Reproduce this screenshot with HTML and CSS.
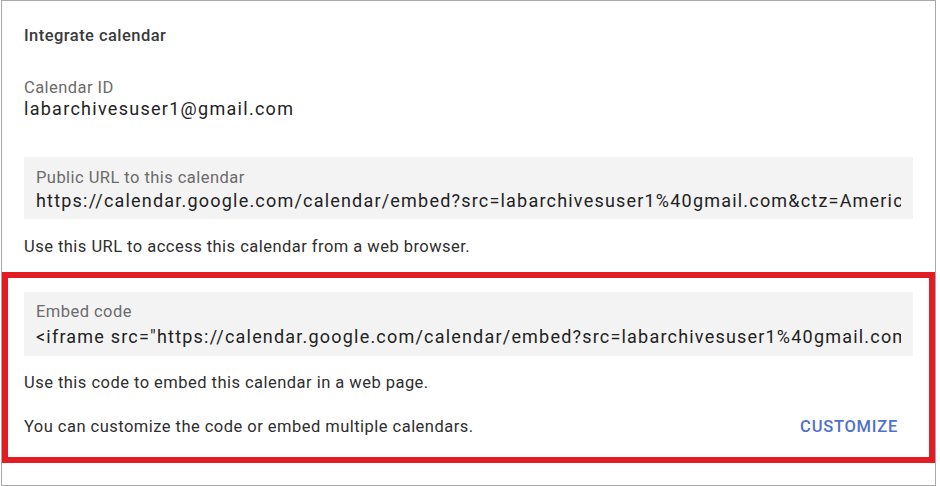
FILE: index.html
```html
<!DOCTYPE html>
<html lang="en">
<head>
<meta charset="utf-8">
<title>Integrate calendar</title>
<link rel="stylesheet" href="styles.css">
</head>
<body>
<div class="frame">
  <section class="top">
    <h2 class="title">Integrate calendar</h2>
    <div class="field">
      <div class="label">Calendar ID</div>
      <div class="value id-value">labarchivesuser1@gmail.com</div>
    </div>
    <div class="box url-box">
      <div class="label">Public URL to this calendar</div>
      <div class="value url-value">https://calendar.google.com/calendar/embed?src=labarchivesuser1%40gmail.com&amp;ctz=America%2FNew_York</div>
    </div>
    <p class="hint url-hint">Use this URL to access this calendar from a web browser.</p>
  </section>
  <section class="highlight">
    <div class="box embed-box">
      <div class="label">Embed code</div>
      <div class="value embed-value">&lt;iframe src="https://calendar.google.com/calendar/embed?src=labarchivesuser1%40gmail.com&amp;ctz=America%2FNew_York" style="border: 0" width="800" height="600" frameborder="0" scrolling="no"&gt;&lt;/iframe&gt;</div>
    </div>
    <p class="hint embed-hint">Use this code to embed this calendar in a web page.</p>
    <div class="row">
      <p class="hint">You can customize the code or embed multiple calendars.</p>
      <a class="btn" href="#">CUSTOMIZE</a>
    </div>
  </section>
</div>
</body>
</html>
```
FILE: styles.css
```css
* { box-sizing: border-box; }
html, body { margin: 0; padding: 0; background: #fff; }
body {
  padding: 0 0 0 1px;
  font-family: Roboto, "Liberation Sans", Arial, sans-serif;
  color: #202124;
}
.frame {
  width: 935px;
  height: 486px;
  border: 1px solid #a9a9a9;
  display: flex;
  flex-direction: column;
}
.top {
  padding: 25px 22px 0 22px;
}
.title {
  margin: 0;
  font-size: 16.5px;
  line-height: 20px;
  font-weight: 500;
  letter-spacing: 0.45px;
  color: #3a3a3a;
}
.field {
  margin-top: 34px;
}
.label {
  font-size: 16.5px;
  line-height: 16px;
  letter-spacing: 0.45px;
  color: #6b6b6b;
}
.value {
  font-size: 18px;
  line-height: 20px;
  letter-spacing: 1.2px;
  color: #222;
  white-space: nowrap;
  overflow: hidden;
}
.id-value { margin-top: 3px; letter-spacing: 1.28px; }
.url-value { margin-top: 5px; }
.embed-value { margin-top: 7px; }
.box {
  background: #f3f3f3;
  padding: 0 12px;
}
.url-box {
  margin-top: 38px;
  height: 62px;
  padding-top: 13px;
}
.hint {
  margin: 0;
  font-size: 16.5px;
  line-height: 20px;
  letter-spacing: 0.47px;
  color: #2e2e2e;
}
.url-hint {
  margin-top: 18px;
}
.highlight {
  margin-top: 15px;
  border: 6px solid #e31b23;
  padding: 14px 16px 20px 16px;
}
.embed-box {
  height: 64px;
  padding-top: 12px;
}
.embed-hint {
  margin-top: 17px;
}
.row {
  margin-top: 24px;
  display: flex;
  justify-content: space-between;
  align-items: center;
  padding-right: 15px;
}
.btn {
  font-size: 16.5px;
  line-height: 20px;
  font-weight: 500;
  letter-spacing: 0.75px;
  color: #4f70cf;
  text-decoration: none;
}
```
